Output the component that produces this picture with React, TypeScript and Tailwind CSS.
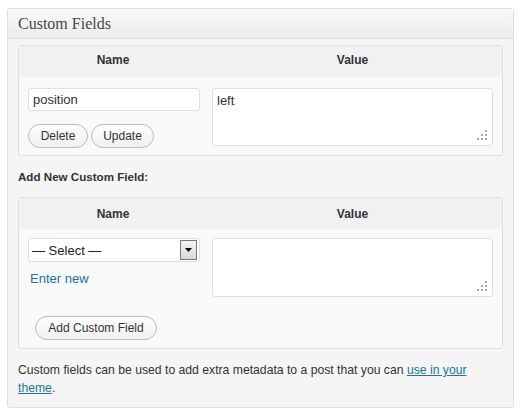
import React from 'react';

const Grip: React.FC = () => (
  <svg className="absolute right-[5px] bottom-[5px]" width="10" height="10" viewBox="0 0 10 10">
    <g fill="#a8a8a8">
      <rect x="8" y="0" width="2" height="2" />
      <rect x="4" y="4" width="2" height="2" />
      <rect x="8" y="4" width="2" height="2" />
      <rect x="0" y="8" width="2" height="2" />
      <rect x="4" y="8" width="2" height="2" />
      <rect x="8" y="8" width="2" height="2" />
    </g>
  </svg>
);

const Pill: React.FC<{ label: string; className?: string }> = ({ label, className = '' }) => (
  <button
    type="button"
    className={`h-[24px] rounded-full border border-[#bbb] bg-gradient-to-b from-[#fefefe] to-[#f0f0f0] px-[10px] text-[12px] text-[#333] leading-none ${className}`}
  >
    {label}
  </button>
);

const TableHead: React.FC<{ pb: string }> = ({ pb }) => (
  <div className={`flex h-[31px] items-center bg-[#f1f1f1] ${pb} text-[12px] font-bold text-[#333]`}>
    <div className="w-[188px] text-center">Name</div>
    <div className="flex-1 pr-[4px] text-center">Value</div>
  </div>
);

const ValueBox: React.FC<{ text?: string; h: string }> = ({ text, h }) => (
  <div className={`relative ${h} w-[281px] rounded-[3px] border border-[#dfdfdf] bg-white px-[4px] py-[2px] text-[13px] text-[#333]`}>
    {text}
    <Grip />
  </div>
);

export default function App() {
  return (
    <div className="min-h-[416px] bg-white pl-[7px] pt-[8px]" style={{ fontFamily: '"Liberation Sans", Arial, sans-serif' }}>
      <div className="h-[400px] w-[507px] rounded-[3px] border border-[#dfdfdf] bg-[#f5f5f5]">
        {/* Title bar */}
        <div className="flex h-[30px] items-center border-b border-[#dfdfdf] bg-gradient-to-b from-[#f9f9f9] to-[#ececec] pl-[10px]">
          <h3 className="text-[16px] text-[#464646]" style={{ fontFamily: '"Liberation Serif", Georgia, serif' }}>Custom Fields</h3>
        </div>

        <div className="px-[10px] pt-[6px]">
          {/* Existing fields */}
          <div className="rounded-[3px] border border-[#dfdfdf] bg-[#f9f9f9]">
            <TableHead pb="pb-[3px]" />
            <div className="flex pb-[7px] pt-[11px]">
              <div className="w-[193px] pl-[9px]">
                <div className="flex h-[23px] w-[172px] items-center rounded-[3px] border border-[#dfdfdf] bg-white px-[4px] text-[13px] text-[#333]">
                  position
                </div>
                <div className="mt-[13px] flex gap-[3px]">
                  <Pill label="Delete" className="w-[60px]" />
                  <Pill label="Update" className="w-[63px]" />
                </div>
              </div>
              <ValueBox text="left" h="h-[58px]" />
            </div>
          </div>

          <div className="mt-[12px] text-[11.6px] font-bold text-[#333]">Add New Custom Field:</div>

          {/* New field */}
          <div className="mt-[12px] rounded-[3px] border border-[#dfdfdf] bg-[#f9f9f9]">
            <TableHead pb="pb-0" />
            <div className="flex pt-[9px]">
              <div className="w-[193px] pl-[9px]">
                <div className="flex h-[24px] w-[172px] items-center justify-between rounded-[3px] border border-[#dfdfdf] bg-white pl-[3px] pr-[2px] text-[13px] text-[#222]">
                  <span>— Select —</span>
                  <span className="flex h-[20px] w-[17px] items-center justify-center border border-[#777] bg-gradient-to-b from-[#f4f4f4] to-[#d8d8d8]">
                    <svg width="7" height="4" viewBox="0 0 7 4">
                      <path d="M0 0h7L3.5 4z" fill="#000" />
                    </svg>
                  </span>
                </div>
                <div className="mt-[7px] pl-[2px] text-[13px] text-[#21759b]">Enter new</div>
              </div>
              <ValueBox h="h-[59px]" />
            </div>
            <div className="pb-[8px] pl-[16px] pt-[18px]">
              <Pill label="Add Custom Field" className="w-[122px]" />
            </div>
          </div>

          <p className="mt-[12px] text-[12.2px] leading-[18px] text-[#333]">
            Custom fields can be used to add extra metadata to a post that you can{' '}
            <a className="text-[#21759b] underline">use in your theme</a>.
          </p>
        </div>
      </div>
    </div>
  );
}
